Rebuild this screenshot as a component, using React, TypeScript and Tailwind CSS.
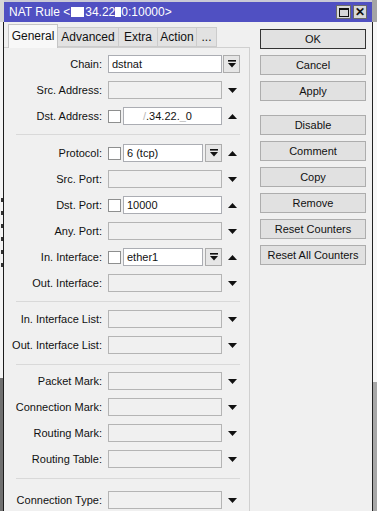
import React from 'react';

type Row = {
  label: string;
  check?: boolean;
  value?: React.ReactNode;
  inlineDd?: boolean;
  trail: 'up' | 'down' | 'dd';
};

const groups: Row[][] = [
  [
    { label: 'Chain', value: 'dstnat', trail: 'dd' },
    { label: 'Src. Address', trail: 'down' },
    {
      label: 'Dst. Address',
      check: true,
      value: (
        <span className="pl-[16px]">
          <span className="text-[#b8b8b8]">/</span>.34.22.<span className="text-[#b8b8b8]">_</span>0
        </span>
      ),
      trail: 'up',
    },
  ],
  [
    { label: 'Protocol', check: true, value: '6 (tcp)', inlineDd: true, trail: 'up' },
    { label: 'Src. Port', trail: 'down' },
    { label: 'Dst. Port', check: true, value: '10000', trail: 'up' },
    { label: 'Any. Port', trail: 'down' },
    { label: 'In. Interface', check: true, value: 'ether1', inlineDd: true, trail: 'up' },
    { label: 'Out. Interface', trail: 'down' },
  ],
  [
    { label: 'In. Interface List', trail: 'down' },
    { label: 'Out. Interface List', trail: 'down' },
  ],
  [
    { label: 'Packet Mark', trail: 'down' },
    { label: 'Connection Mark', trail: 'down' },
    { label: 'Routing Mark', trail: 'down' },
    { label: 'Routing Table', trail: 'down' },
  ],
  [{ label: 'Connection Type', trail: 'down' }],
];

// spacing around each separator (above / below)
const sepClass = [
  'mt-[9px] mb-[9px]',
  'mt-[9px] mb-[8px]',
  'mt-[10px] mb-[7px]',
  'mt-[10px] mb-[12px]',
];

const DdIcon = () => (
  <svg width="8" height="8" viewBox="0 0 8 8">
    <rect x="0" y="0" width="8" height="1.6" fill="#111" />
    <path d="M0 3 H8 L4 7.5 Z" fill="#111" />
  </svg>
);

const DdButton = () => (
  <div className="flex h-[18px] w-[17px] items-center justify-center border border-[#acacac] bg-[#e6e6e6]">
    <DdIcon />
  </div>
);

const Tri = ({ up }: { up?: boolean }) => (
  <svg width="9" height="5" viewBox="0 0 9 5">
    <path d={up ? 'M0 5 H9 L4.5 0 Z' : 'M0 0 H9 L4.5 5 Z'} fill="#111" />
  </svg>
);

const FieldRow = ({ row }: { row: Row }) => (
  <div className="flex h-[18px] items-center">
    <div className="w-[98px] whitespace-nowrap text-right">{row.label}:</div>
    <div className="ml-[6px] flex h-full w-[114px] items-center">
      {row.check && <div className="mr-[2px] h-[13px] w-[13px] border border-[#8e8f8f] bg-white" />}
      <div
        className={`flex h-full min-w-0 flex-1 items-center overflow-hidden whitespace-nowrap border px-[3px] ${
          row.value ? 'border-[#abadb3] bg-white' : 'border-[#b4b4b4] bg-[#f0f0f0]'
        }`}
      >
        {row.value}
      </div>
      {row.inlineDd && (
        <div className="ml-[2px]">
          <DdButton />
        </div>
      )}
    </div>
    <div className="ml-[1px] flex w-[18px] justify-center">
      {row.trail === 'dd' ? (
        <div className="-ml-[1px]">
          <DdButton />
        </div>
      ) : (
        <Tri up={row.trail === 'up'} />
      )}
    </div>
  </div>
);

const buttons = [
  ['OK', 'Cancel', 'Apply'],
  ['Disable', 'Comment', 'Copy', 'Remove', 'Reset Counters', 'Reset All Counters'],
];

// tails of letters from the window behind
const marks = ['mt-[0px]', 'mt-[9px]', 'mt-[9px]', 'mt-[9px]', 'mt-[9px]', 'mt-[9px]'];

const App: React.FC = () => {
  return (
    <div className="flex h-[511px] w-[377px] overflow-hidden bg-[#9d9d9d] font-['Liberation_Sans',Arial,sans-serif] text-[11px] text-[#111]">
      {/* window behind, left edge */}
      <div className="flex w-[4px] flex-col">
        <div className="h-[22px] bg-[#d6d6d6]" />
        <div className="flex h-[356px] flex-col items-end border-r border-[#1c1c1c] bg-[#f4f4f4] pt-[176px]">
          {marks.map((m, i) => (
            <div key={i} className={`h-[4px] w-[2px] bg-[#333] ${m}`} />
          ))}
        </div>
        <div className="flex-1 border-r border-[#1c1c1c] bg-[#707070]" />
      </div>

      {/* dialog */}
      <div className="flex w-[368px] flex-col border-t-2 border-[#c9c9d6] bg-[#f0f0f0]">
        <div className="flex h-[20px] items-center bg-[#5050c2] pl-[5px] pr-[5px] text-[12px] text-white">
          <span className="flex items-center whitespace-nowrap">
            NAT Rule &lt;
            <span className="mx-[1px] inline-block h-[10px] w-[13px] bg-white" />
            34.22
            <span className="inline-block h-[10px] w-[6px] bg-white" />
            0:10000&gt;
          </span>
          <div className="ml-auto flex gap-[2px]">
            <div className="flex h-[14px] w-[15px] items-center justify-center border border-[#6a6a6a] bg-[#d8d8d8]">
              <div className="h-[9px] w-[10px] border border-[#111] border-t-2" />
            </div>
            <div className="flex h-[14px] w-[14px] items-center justify-center border border-[#6a6a6a] bg-[#d8d8d8] text-[12px] font-bold leading-none text-[#111]">
              ✕
            </div>
          </div>
        </div>

        <div className="flex flex-1">
          {/* tabs + panel */}
          <div className="flex w-[246px] flex-col">
            <div className="flex h-[25px] items-end pl-[4px] pt-[2px]">
              <div className="z-10 -mb-px flex h-[24px] w-[50px] items-center justify-center border border-b-0 border-[#c5c5c5] bg-[#f8f8f8] pb-[2px] text-[12px]">
                General
              </div>
              {['Advanced', 'Extra', 'Action', '...'].map((t, i) => (
                <div
                  key={t}
                  className={`flex h-[20px] items-center justify-center border border-l-0 border-[#cccccc] bg-[#e2e2e2] text-[12px] ${
                    ['w-[61px]', 'w-[39px]', 'w-[39px]', 'w-[20px]'][i]
                  }`}
                >
                  {t}
                </div>
              ))}
            </div>
            <div className="flex flex-1 flex-col border-r border-t border-[#d0d0d0] pt-[7px]">
              {groups.map((g, gi) => (
                <div key={gi}>
                  {gi > 0 && <div className={`ml-[12px] w-[224px] border-t border-[#d9d9d9] ${sepClass[gi - 1]}`} />}
                  <div className="flex flex-col gap-[8px]">
                    {g.map((r) => (
                      <FieldRow key={r.label} row={r} />
                    ))}
                  </div>
                </div>
              ))}
            </div>
          </div>

          {/* buttons */}
          <div className="ml-[10px] flex w-[106px] flex-col gap-[14px] pt-[7px]">
            {buttons.map((grp, gi) => (
              <div key={gi} className="flex flex-col gap-[6px]">
                {grp.map((b) => (
                  <div
                    key={b}
                    className={`flex h-[20px] items-center justify-center whitespace-nowrap border bg-[#e1e1e1] text-[11px] ${
                      b === 'OK' ? 'border-[#333333]' : 'border-[#adadad]'
                    }`}
                  >
                    {b}
                  </div>
                ))}
              </div>
            ))}
          </div>
        </div>
      </div>

      {/* window behind, right edge */}
      <div className="flex w-[5px] flex-col">
        <div className="h-[22px] bg-[#a5a5a5]" />
        <div className="h-[360px] border-l border-[#222] bg-[#f7f7f7]" />
        <div className="flex-1 border-l border-[#222] bg-[#a8a8a8]" />
      </div>
    </div>
  );
};

export default App;
